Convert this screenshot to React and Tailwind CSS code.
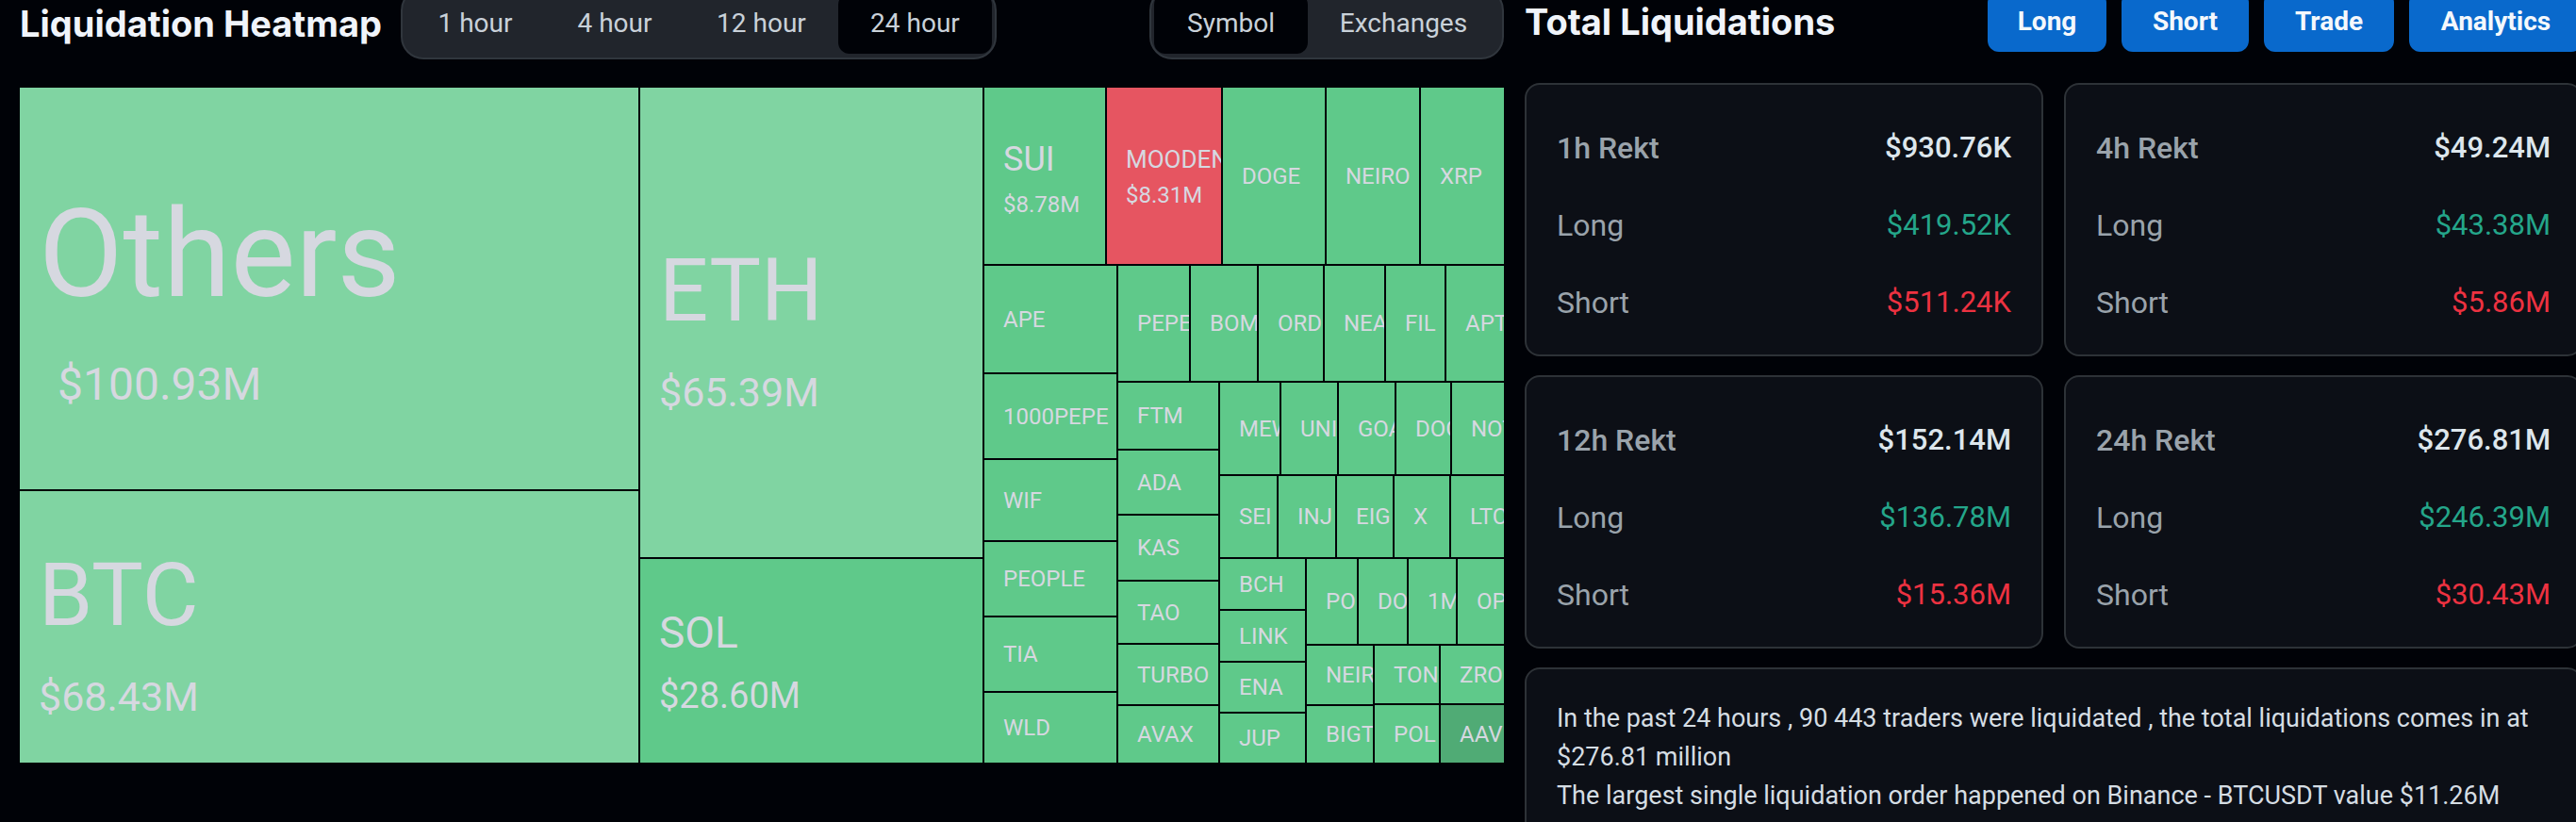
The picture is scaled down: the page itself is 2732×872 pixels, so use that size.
import React, { useState } from 'react';
import clsx from 'clsx';

const periods = [
    { id: '1h', label: '1 hour', width: 'w-[148px]' },
    { id: '4h', label: '4 hour', width: 'w-[148px]' },
    { id: '12h', label: '12 hour', width: 'w-[163px]' },
    { id: '24h', label: '24 hour', width: 'w-[163px]' },
];

const groups = [
    { id: 'symbol', label: 'Symbol', width: 'w-[163px]' },
    { id: 'exchanges', label: 'Exchanges', width: 'w-[203px]' },
];

const actions = [
    { label: 'Long', width: 'w-[126px]' },
    { label: 'Short', width: 'w-[135px]' },
    { label: 'Trade', width: 'w-[138px]' },
    { label: 'Analytics', width: 'w-[184px]' },
];

const totals = [
    { label: '1h Rekt', total: '$930.76K', long: '$419.52K', short: '$511.24K' },
    { label: '4h Rekt', total: '$49.24M', long: '$43.38M', short: '$5.86M' },
    { label: '12h Rekt', total: '$152.14M', long: '$136.78M', short: '$15.36M' },
    { label: '24h Rekt', total: '$276.81M', long: '$246.39M', short: '$30.43M' },
];

const tones = {
    light: 'bg-[#80d4a2]',
    base: 'bg-[#5fc98a]',
    dark: 'bg-[#50ab75]',
    red: 'bg-[#e65561]',
};

const sizes = {
    hero: { name: 'text-[130px] leading-[204px]', amount: 'text-[48px] leading-[72px] pl-5' },
    xl: { name: 'text-[92px] leading-[148px]', amount: 'text-[43px] leading-[66px]' },
    lg: { name: 'text-[46px] leading-[74px]', amount: 'text-[38px] leading-[60px]' },
    md: { name: 'text-[36px] leading-[60px]', amount: 'text-[24px] leading-[36px]' },
    sm: { name: 'text-[26px] leading-[40px]', amount: 'text-[24px] leading-[36px]' },
    xs: { name: 'text-[24px] leading-[36px]', amount: '' },
};

// size is the share of the parent row / column
const coin = (name, size, extra = {}) => ({ name, size, ...extra });
const row = (size, children) => ({ dir: 'row', size, children });
const col = (size, children) => ({ dir: 'col', size, children });

const tree = row(1, [
    col(656, [
        coin('Others', 426, { amount: '$100.93M', tone: 'light', text: 'hero' }),
        coin('BTC', 288, { amount: '$68.43M', tone: 'light', text: 'xl' }),
    ]),
    col(363, [
        coin('ETH', 498, { amount: '$65.39M', tone: 'light', text: 'xl' }),
        coin('SOL', 216, { amount: '$28.60M', text: 'lg' }),
    ]),
    col(551, [
        row(187, [
            coin('SUI', 128, { amount: '$8.78M', text: 'md' }),
            coin('MOODEN', 121, { amount: '$8.31M', tone: 'red', text: 'sm' }),
            coin('DOGE', 108),
            coin('NEIRO', 98),
            coin('XRP', 88),
        ]),
        row(527, [
            col(140, [
                coin('APE', 113),
                coin('1000PEPE', 89),
                coin('WIF', 85),
                coin('PEOPLE', 78),
                coin('TIA', 78),
                coin('WLD', 74),
            ]),
            col(409, [
                row(122, [
                    coin('PEPE', 75),
                    coin('BOM', 70),
                    coin('ORD', 68),
                    coin('NEA', 63),
                    coin('FIL', 62),
                    coin('APT', 61),
                ]),
                row(403, [
                    col(106, [
                        coin('FTM', 70),
                        coin('ADA', 67),
                        coin('KAS', 68),
                        coin('TAO', 65),
                        coin('TURBO', 63),
                        coin('AVAX', 60),
                    ]),
                    col(301, [
                        row(97, [
                            coin('MEW', 63),
                            coin('UNI', 59),
                            coin('GOA', 59),
                            coin('DOG', 57),
                            coin('NOT', 55),
                        ]),
                        row(86, [
                            coin('SEI', 60),
                            coin('INJ', 60),
                            coin('EIG', 59),
                            coin('X', 58),
                            coin('LTC', 56),
                        ]),
                        row(216, [
                            col(90, [
                                coin('BCH', 53),
                                coin('LINK', 53),
                                coin('ENA', 52),
                                coin('JUP', 52),
                            ]),
                            col(209, [
                                row(90, [
                                    coin('PO', 53),
                                    coin('DO', 51),
                                    coin('1M', 50),
                                    coin('OP', 49),
                                ]),
                                row(124, [
                                    col(70, [coin('NEIR', 62), coin('BIGT', 60)]),
                                    col(68, [coin('TON', 61), coin('POL', 61)]),
                                    col(67, [coin('ZRO', 61), coin('AAV', 61, { tone: 'dark' })]),
                                ]),
                            ]),
                        ]),
                    ]),
                ]),
            ]),
        ]),
    ]),
]);

function Tile({ node }) {
    const text = sizes[node.text || 'xs'];
    return (
        <div
            className={clsx('flex min-w-0 min-h-0 flex-col justify-center overflow-hidden whitespace-nowrap text-[#d6d8e0]', tones[node.tone || 'base'])}
            style={{ flex: `${node.size} 1 0px` }}
        >
            <div className="pl-5">
                <div className={text.name}>{node.name}</div>
                {node.amount && <div className={text.amount}>{node.amount}</div>}
            </div>
        </div>
    );
}

function Treemap({ node }) {
    if (!node.children) return <Tile node={node} />;
    return (
        <div
            className={clsx('flex min-w-0 min-h-0 gap-0.5', node.dir === 'col' ? 'flex-col' : 'flex-row')}
            style={{ flex: `${node.size} 1 0px` }}
        >
            {node.children.map((child, i) => (
                <Treemap key={i} node={child} />
            ))}
        </div>
    );
}

function Segmented({ items, value, onChange }) {
    return (
        <div className="flex h-[76px] shrink-0 rounded-3xl border-2 border-[#30363d] bg-[#21252c] px-[3px] py-1">
            {items.map((item) => (
                <button
                    key={item.id}
                    type="button"
                    onClick={() => onChange(item.id)}
                    className={clsx('rounded-xl text-[28px] text-[#c9d1d9]', item.width, value === item.id && 'bg-[#000207]')}
                >
                    {item.label}
                </button>
            ))}
        </div>
    );
}

function RektCard({ item }) {
    return (
        <dl className="flex flex-col gap-10 rounded-2xl border-2 border-[#2d3237] bg-[#0c0f16] px-8 pt-[46px] pb-[34px] text-[32px] leading-[42px] text-[#9aa3ab]">
            <div className="flex justify-between">
                <dt className="font-medium">{item.label}</dt>
                <dd className="text-[31px] font-medium text-[#dde6ec]">{item.total}</dd>
            </div>
            <div className="flex justify-between">
                <dt>Long</dt>
                <dd className="text-[31px] text-[#24a68a]">{item.long}</dd>
            </div>
            <div className="flex justify-between">
                <dt>Short</dt>
                <dd className="text-[31px] text-[#ed3241]">{item.short}</dd>
            </div>
        </dl>
    );
}

export default function App() {
    const [period, setPeriod] = useState('24h');
    const [group, setGroup] = useState('symbol');

    return (
        <div className="h-screen overflow-hidden bg-[#000207] font-['Roboto',sans-serif]">
            <main className="-mt-[13px] -mr-[7px] grid grid-cols-[1574fr_1122fr] items-start gap-[22px] pl-[21px]">
                {/* Heatmap */}
                <section className="min-w-0">
                    <header className="flex items-center justify-between">
                        <div className="flex items-center gap-5">
                            <h2 className="font-['Inter',sans-serif] text-[38px] leading-[48px] font-bold whitespace-nowrap text-[#f0f4fa]">Liquidation Heatmap</h2>
                            <Segmented items={periods} value={period} onChange={setPeriod} />
                        </div>
                        <Segmented items={groups} value={group} onChange={setGroup} />
                    </header>
                    <div className="mt-[30px] flex h-[716px]">
                        <Treemap node={tree} />
                    </div>
                </section>

                {/* Totals */}
                <section className="min-w-0">
                    <header className="flex h-[72px] items-center justify-between">
                        <h2 className="font-['Inter',sans-serif] text-[38px] leading-[48px] font-bold whitespace-nowrap text-[#f0f4fa]">Total Liquidations</h2>
                        <div className="flex gap-4">
                            {actions.map((action) => (
                                <button key={action.label} type="button" className={clsx('h-16 rounded-xl bg-[#0969cc] text-[28px] font-bold text-[#f4f8fc]', action.width)}>
                                    {action.label}
                                </button>
                            ))}
                        </div>
                    </header>
                    <div className="mt-[29px] grid grid-cols-2 gap-x-[22px] gap-y-5">
                        {totals.map((item) => (
                            <RektCard key={item.label} item={item} />
                        ))}
                        <div className="col-span-2 rounded-2xl border-2 border-[#2d3237] bg-[#0c0f16] px-8 py-8 text-[27px] leading-[41px] text-[#d5dde3]">
                            <p>In the past 24 hours , 90 443 traders were liquidated , the total liquidations comes in at $276.81 million</p>
                            <p>The largest single liquidation order happened on Binance - BTCUSDT value $11.26M</p>
                        </div>
                    </div>
                </section>
            </main>
        </div>
    );
}
